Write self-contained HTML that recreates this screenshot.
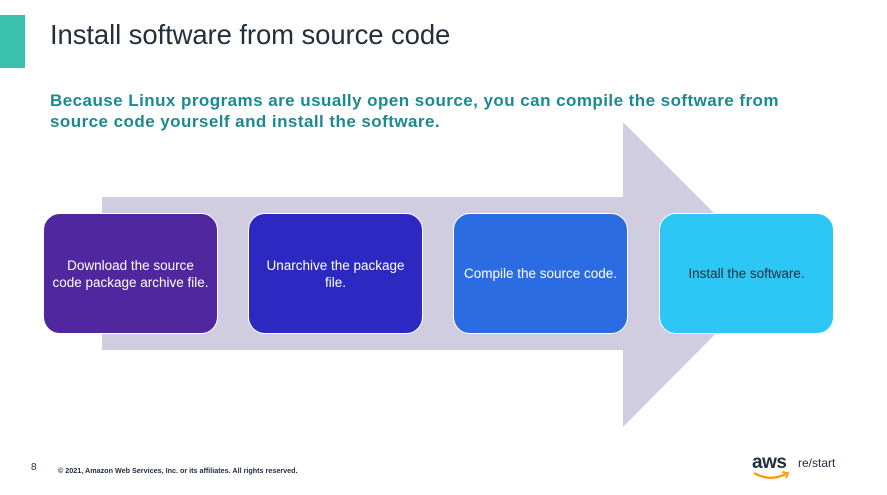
<!DOCTYPE html>
<html><head><style>
body{margin:0;width:887px;height:495px;background:#fff;position:relative;overflow:hidden;font-family:"Liberation Sans",sans-serif}
.bar{position:absolute;left:0;top:15px;width:25px;height:53px;background:#3cc0ae}
h1{position:absolute;left:50px;top:19px;margin:0;font-weight:normal;font-size:27.5px;color:#232f3e;letter-spacing:-0.1px}
.sub{position:absolute;left:50px;top:90px;width:800px;font-weight:bold;font-size:17px;line-height:21px;color:#1b8a90;letter-spacing:0.45px}
.box{position:absolute;top:213px;width:173px;height:119px;border:1.5px solid #fff;border-radius:17px;display:flex;align-items:center;justify-content:center;text-align:center;font-size:13.5px;line-height:17px;color:#fff;box-sizing:content-box}
.foot{position:absolute;top:466px;font-size:7.2px;font-weight:bold;color:#232f3e}
</style></head><body>
<div class="bar"></div>
<h1>Install software from source code</h1>
<div class="sub">Because Linux programs are usually open source, you can compile the software from<br>source code yourself and install the software.</div>
<svg style="position:absolute;left:0;top:0" width="887" height="495"><polygon points="102,197 623,197 623,122 775,274 623,427 623,350 102,350" fill="#d0cde0"/></svg>
<div class="box" style="left:43px;background:#5127a0"><span>Download the source<br>code package archive file.</span></div>
<div class="box" style="left:248px;background:#2c28c2"><span>Unarchive the package<br>file.</span></div>
<div class="box" style="left:453px;background:#2c6ce3"><span>Compile the source code.</span></div>
<div class="box" style="left:659px;background:#2cc7f4;color:#232f3e"><span>Install the software.</span></div>
<div class="foot" style="left:31px;font-size:10px;font-weight:normal;top:462px">8</div>
<div class="foot" style="left:58px">© 2021, Amazon Web Services, Inc. or its affiliates. All rights reserved.</div>
<div style="position:absolute;left:752px;top:452px;font-size:19px;font-weight:bold;color:#232f3e;letter-spacing:-0.5px">aws</div>
<div style="position:absolute;left:798px;top:456px;font-size:12px;color:#232f3e">re/start</div>
<svg style="position:absolute;left:752px;top:470px" width="40" height="12"><path d="M2 3 Q18 12 34 4" stroke="#f90" stroke-width="2.2" fill="none"/><path d="M30 2 L36 3 L34 8" stroke="#f90" stroke-width="1.8" fill="none"/></svg>
</body></html>
